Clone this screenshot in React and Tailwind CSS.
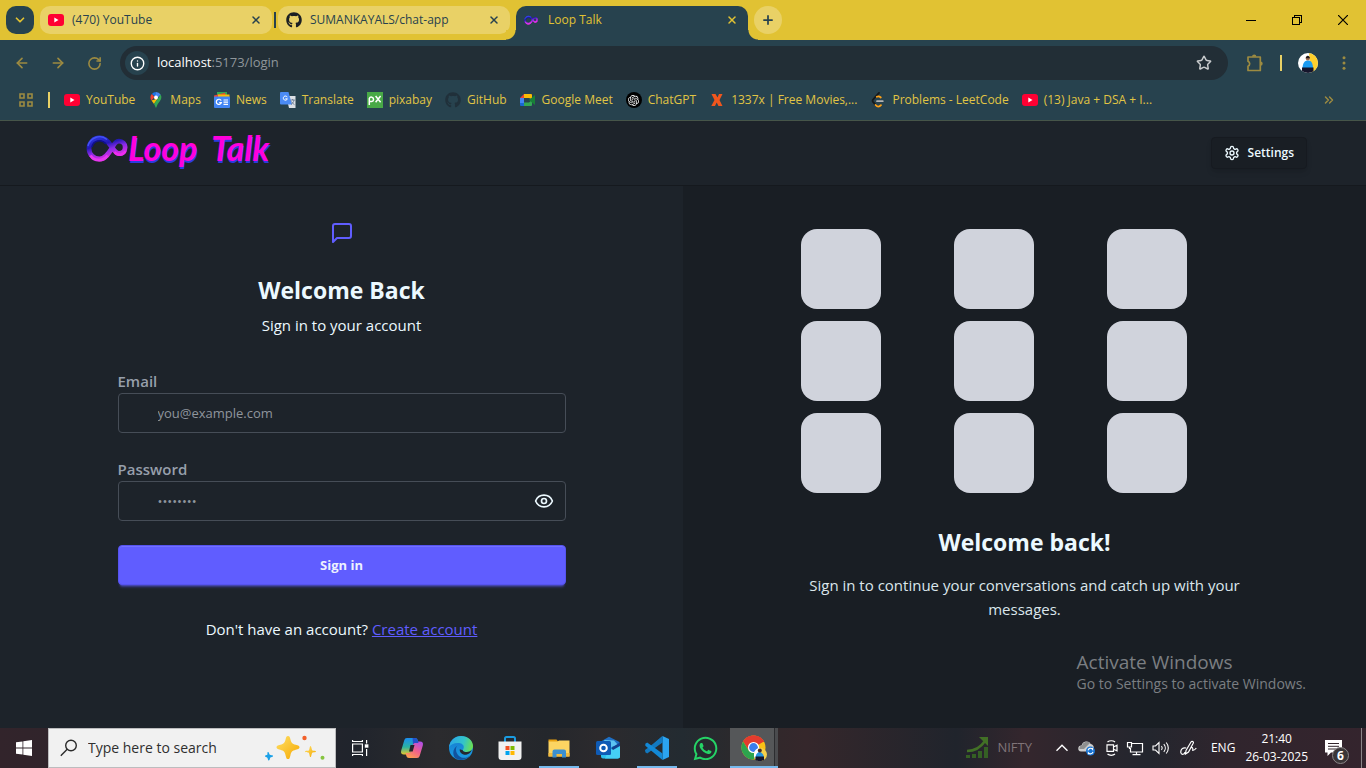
import { useState } from "react";
import { ArrowLeft, ArrowRight, ChevronDown, ChevronsRight, Eye, Info, Plus, RotateCw, Star, X } from "lucide-react";
import { FaGithub, FaWhatsapp } from "react-icons/fa";
import { SiOpenai } from "react-icons/si";

/* ---------- Site and app icons ---------- */

const YouTubeIcon = () => (
  <svg viewBox="0 0 16 16" className="size-4 shrink-0" aria-hidden="true">
    <rect x="0" y="2" width="16" height="12" rx="3" fill="#ff0033" />
    <path d="M6.3 5.6v4.8L10.5 8z" fill="#fff" />
  </svg>
);

const InfinityMark = ({ className, id }) => (
  <svg viewBox="0 0 42 28" className={className} aria-hidden="true">
    <defs>
      <linearGradient id={id} x1="0.1" y1="0" x2="0.6" y2="1">
        <stop offset="0" stopColor="#2b35e0" />
        <stop offset="0.35" stopColor="#2218b4" />
        <stop offset="0.6" stopColor="#8a2be8" />
        <stop offset="1" stopColor="#f22fe0" />
      </linearGradient>
    </defs>
    <path d="M25 12C22 7 18 4 13.500 4a10.500 10.500 0 1 0 0 21C19.500 25 23 19 26 14c2-4 4-6.800 7-6.800a6.100 6.100 0 1 1 0 12.300C29.500 19.500 28 16 25 12z" fill="none" stroke={`url(#${id})`} strokeWidth="4.800" />
    <path d="M2 12C4 4 14-.5 21 5.500" fill="none" stroke="#4653f5" strokeWidth="1.400" />
    <path d="M6 13c1-6 9-9 14-3" fill="none" stroke="#10108c" strokeWidth="1.600" />
    <path d="M4.500 21.500c4 6.500 13 6 17 0" fill="none" stroke="#e838f0" strokeWidth="2.800" />
    <path d="M28.500 18c3 4.500 9.500 3 11-1" fill="none" stroke="#f02cf0" strokeWidth="2.400" />
  </svg>
);

const MapsIcon = () => (
  <svg viewBox="0 0 16 16" className="size-4 shrink-0" aria-hidden="true">
    <path d="M8 0a5.500 5.500 0 0 0-4.200 2l3 2.600z" fill="#1a73e8" />
    <path d="M3.800 2A5.500 5.500 0 0 0 3.500 8.600L6.500 5z" fill="#ea4335" />
    <path d="M8 0a5.500 5.500 0 0 1 4.600 2.600L9.500 6 6.600 4.400z" fill="#4285f4" />
    <path d="M3.500 8.600 9.600 6.500 6 12z" fill="#fbbc04" />
    <path d="M12.600 2.600C14 5 13.500 7.500 11.600 9.600 9.500 12 9 14 8 16c-.8-1.500-1-2.700-2-4z" fill="#34a853" />
    <circle cx="8" cy="5.500" r="2" fill="#fff" />
  </svg>
);

const NewsIcon = () => (
  <svg viewBox="0 0 16 16" className="size-4 shrink-0" aria-hidden="true">
    <path d="M3 0h10v6H3z" fill="#34a853" />
    <path d="M0 3.500 11 .8l1 5H0z" fill="#ea4335" />
    <path d="M4 2.500h11.500V6H4z" fill="#fbbc04" />
    <rect y="4.500" width="16" height="11.500" rx="1" fill="#4285f4" />
    <path d="M7.200 8.600a2.600 2.600 0 1 0 .2 2H5.200M9.500 8h4.500M9.500 10.200h4.500M9.500 12.400h4.500" fill="none" stroke="#fff" strokeWidth="1.200" />
  </svg>
);

const TranslateIcon = () => (
  <svg viewBox="0 0 16 16" className="size-4 shrink-0" aria-hidden="true">
    <path d="M6 4h9.500v12H9z" fill="#dce0e6" />
    <path d="M1 0h7.500l3.500 12.500H1a1 1 0 0 1-1-1V1a1 1 0 0 1 1-1z" fill="#4b8bf5" />
    <path d="M7.300 5.200A2.100 2.100 0 1 0 7.400 6.800H5.400" fill="none" stroke="#fff" strokeWidth="1" />
    <path d="M10.500 8h4.300M12.600 7v1M14 8c-.3 2-1.500 3.500-3 4.500M11.500 9.500c.7 1.500 1.600 2.300 3 3.200" fill="none" stroke="#5d6f86" strokeWidth=".8" />
  </svg>
);

const PixabayIcon = () => (
  <svg viewBox="0 0 16 16" className="size-4 shrink-0" aria-hidden="true">
    <rect width="16" height="16" fill="#48a947" />
    <path d="M2.300 13V6.500a2.200 2.200 0 1 1 2.300 3H2.500M8.600 4l5 6.300M13.600 4l-5 6.300" fill="none" stroke="#fff" strokeWidth="1.500" />
  </svg>
);

const MeetIcon = () => (
  <svg viewBox="0 0 16 16" className="size-4 shrink-0" aria-hidden="true">
    <path d="M0 6l4-4v4z" fill="#ea4335" />
    <path d="M4 2h7a1 1 0 0 1 1 1v4L9 6H4z" fill="#fbbc04" />
    <path d="M0 6h4v5H0z" fill="#4285f4" />
    <path d="M0 11h4v3H1a1 1 0 0 1-1-1z" fill="#1967d2" />
    <path d="M4 10.500h5L12 8v5a1 1 0 0 1-1 1H4z" fill="#34a853" />
    <path d="M9 8l6-5v10z" fill="#188038" />
  </svg>
);

const ChatGptIcon = () => (
  <span className="flex size-4 shrink-0 items-center justify-center rounded-full bg-black text-white">
    <SiOpenai size={11} />
  </span>
);

const XIcon = () => (
  <svg viewBox="0 0 16 16" className="size-4 shrink-0" aria-hidden="true">
    <path d="M2.500 2h4L8.500 5.600 10 2h3.500l-3 6 3 6h-4L7.700 10.400 6 14H2.300l3.200-6z" fill="#f0561d" />
  </svg>
);

const LeetCodeIcon = () => (
  <svg viewBox="0 0 16 16" className="size-4 shrink-0" aria-hidden="true">
    <path d="M9 .9 3.200 7.300a2 2 0 0 0 0 2.900l2.200 2.400" fill="none" stroke="#15191c" strokeWidth="1.800" strokeLinecap="round" />
    <path d="M6.800 4.800c1.500-.9 2.600-.6 4 .7M5.600 13c1.800 2.200 3.700 2.200 5.400.2" fill="none" stroke="#ffa116" strokeWidth="1.800" strokeLinecap="round" />
    <path d="M7 9.200h5.800" stroke="#b3b3b3" strokeWidth="1.700" strokeLinecap="round" />
  </svg>
);

const PuzzleIcon = () => (
  <svg viewBox="0 0 18 18" className="size-[18px]" fill="none" stroke="currentColor" strokeWidth="1.700" strokeLinejoin="round" aria-hidden="true">
    <path d="M2 3h12.300v13.500H2v-4.200a2.700 2.700 0 0 0 0-5z" />
    <path d="M6 2.800a2.200 2.200 0 0 1 4.400 0zM14.500 7.400a2.200 2.200 0 0 1 0 4.400z" fill="currentColor" stroke="none" />
  </svg>
);

const Portrait = ({ className }) => (
  <svg viewBox="0 0 20 20" className={className} aria-hidden="true">
    <clipPath id="face"><circle cx="10" cy="10" r="10" /></clipPath>
    <g clipPath="url(#face)">
      <rect width="20" height="20" fill="#fff" />
      <path d="M11 0h9v20h-7z" fill="#ffd02c" />
      <path d="M4.500 15c.3-5 2-7.500 5.500-7.500s4.700 2.500 5 7.500z" fill="#1d9bf0" />
      <path d="M4 14.500h11.500V20H4z" fill="#15152b" />
      <circle cx="9.800" cy="5.600" r="2" fill="#9b6b50" />
      <path d="M7.700 5.200c0-3.400 4.200-3.400 4.200 0z" fill="#231a1a" />
    </g>
  </svg>
);

const GearIcon = () => (
  <svg viewBox="0 0 24 24" className="size-4" fill="none" stroke="currentColor" strokeWidth="2" strokeLinecap="round" strokeLinejoin="round" aria-hidden="true">
    <path d="M12.22 2h-.44a2 2 0 0 0-2 2v.18a2 2 0 0 1-1 1.730l-.43.25a2 2 0 0 1-2 0l-.15-.08a2 2 0 0 0-2.730.73l-.22.38a2 2 0 0 0 .73 2.730l.15.1a2 2 0 0 1 1 1.720v.51a2 2 0 0 1-1 1.740l-.15.09a2 2 0 0 0-.73 2.730l.22.38a2 2 0 0 0 2.730.73l.15-.08a2 2 0 0 1 2 0l.43.25a2 2 0 0 1 1 1.730V20a2 2 0 0 0 2 2h.44a2 2 0 0 0 2-2v-.18a2 2 0 0 1 1-1.730l.43-.25a2 2 0 0 1 2 0l.15.08a2 2 0 0 0 2.730-.73l.22-.39a2 2 0 0 0-.73-2.730l-.15-.08a2 2 0 0 1-1-1.740v-.5a2 2 0 0 1 1-1.740l.15-.09a2 2 0 0 0 .73-2.730l-.22-.38a2 2 0 0 0-2.730-.73l-.15.08a2 2 0 0 1-2 0l-.43-.25a2 2 0 0 1-1-1.730V4a2 2 0 0 0-2-2z" />
    <circle cx="12" cy="12" r="3" />
  </svg>
);

const BubbleIcon = () => (
  <svg viewBox="0 0 24 24" className="size-6 text-[#605dff]" fill="none" stroke="currentColor" strokeWidth="2" strokeLinecap="round" strokeLinejoin="round" aria-hidden="true">
    <path d="M21 15a2 2 0 0 1-2 2H7l-4 4V5a2 2 0 0 1 2-2h14a2 2 0 0 1 2 2z" />
  </svg>
);

/* ---------- Taskbar icons ---------- */

const CopilotIcon = () => (
  <svg viewBox="0 0 24 24" className="size-6" aria-hidden="true">
    <defs>
      <linearGradient id="cpA" x1="0" y1="0" x2="0" y2="1"><stop offset="0" stopColor="#1b8df0" /><stop offset="0.55" stopColor="#2bb3a0" /><stop offset="1" stopColor="#e8c92c" /></linearGradient>
      <linearGradient id="cpB" x1="0.8" y1="0" x2="0.2" y2="1"><stop offset="0" stopColor="#b04fe8" /><stop offset="0.5" stopColor="#f0608c" /><stop offset="1" stopColor="#ffa24c" /></linearGradient>
    </defs>
    <path d="M7 2h8c1.500 0 2.200.8 2.700 2.200L18.500 7h-3c-1.500 0-2.300.8-2.700 2.200L10.500 17c-.4 1-1 1.500-2 1.500H4C1.500 18.500.5 17 1.200 14.500l3-10C4.700 2.800 5.500 2 7 2z" fill="url(#cpA)" />
    <path d="M17 22H9c-1.500 0-2.200-.8-2.700-2.200L5.500 17h3c1.500 0 2.300-.8 2.700-2.200L13.500 7c.4-1 1-1.500 2-1.500H20c2.500 0 3.500 1.500 2.800 4l-3 10c-.5 1.700-1.300 2.500-2.800 2.500z" fill="url(#cpB)" />
    <path d="M12.600 2h2.400c1.500 0 2.200.8 2.700 2.200L18.500 7h-3c-1.200 0-2 .5-2.500 1.500z" fill="#2450c8" />
    <path d="M10.500 9h4l-1.800 6.500H9z" fill="#22252c" />
  </svg>
);

const EdgeIcon = () => (
  <svg viewBox="0 0 24 24" className="size-6" aria-hidden="true">
    <defs>
      <linearGradient id="edA" x1="0" y1="0.3" x2="1" y2="0.5"><stop offset="0" stopColor="#2aa5e8" /><stop offset="0.6" stopColor="#33c4c9" /><stop offset="1" stopColor="#6adf52" /></linearGradient>
      <linearGradient id="edB" x1="0" y1="0" x2="0" y2="1"><stop offset="0" stopColor="#1578cf" /><stop offset="1" stopColor="#1b9de2" /></linearGradient>
    </defs>
    <circle cx="12" cy="12" r="12" fill="url(#edB)" />
    <path d="M0 11C1 4.500 6 0 12 0c7 0 12 4.800 12 10 0 3.800-3 6-6.200 6-2.500 0-4-.8-4-1.800 0-.8 1-1.300 1-3.200C14.800 8.500 12 7 9 7c-4.500 0-7.500 1.800-9 4z" fill="url(#edA)" />
    <path d="M8.500 9.500C6 12 6.500 17 10 20c3.500 2.800 8.500 2.500 12-1.500-4 5.500-11 7-16 3.500C3 18 4 12 8.500 9.500z" fill="#11539f" />
    <path d="M13.800 14.200c0 1 1.500 1.800 4 1.800 2 0 3.700-.8 4.900-2.200-.7 2.700-2.500 4.500-5.500 4.900-4 .4-7-2.500-6.400-5.500z" fill="#25282d" />
  </svg>
);

const StoreIcon = () => (
  <svg viewBox="0 0 24 24" className="size-6" aria-hidden="true">
    <path d="M7 7V2.500A1.500 1.500 0 0 1 8.500 1h7A1.500 1.500 0 0 1 17 2.500V7" fill="none" stroke="#1a9be0" strokeWidth="2" />
    <path d="M.5 5.500h23V21a3 3 0 0 1-3 3h-17a3 3 0 0 1-3-3z" fill="#f1f1f1" />
    <path d="M7.500 10H11.500v4H7.500z" fill="#f25022" /><path d="M12.500 10h4v4h-4z" fill="#7fba00" />
    <path d="M7.500 15H11.500v4H7.500z" fill="#00a4ef" /><path d="M12.500 15h4v4h-4z" fill="#ffb900" />
  </svg>
);

const FolderIcon = () => (
  <svg viewBox="0 0 24 24" className="size-6" aria-hidden="true">
    <path d="M1.500 3.500h8l2 2.500h-10z" fill="#e8a010" />
    <path d="M1.500 5.500h9l1.500-1h10.500v16h-21z" fill="#fcd462" />
    <path d="M1.500 17h21v3.500h-21z" fill="#f2b93c" />
    <path d="M5.500 21.500v-6a2 2 0 0 1 2-2h9.500a2 2 0 0 1 2 2v6h-4V18h-5.500v3.500z" fill="#3b8fd0" />
  </svg>
);

const OutlookIcon = () => (
  <svg viewBox="0 0 24 24" className="size-6" aria-hidden="true">
    <path d="M4 6 13 .7 23.500 6v6H4z" fill="#1e6fc4" />
    <path d="M8 4 18 4.500 22 9 12 12z" fill="#5cc3f2" />
    <path d="M5 11h19v9a2.500 2.500 0 0 1-2.500 2.500H7A2 2 0 0 1 5 20.500z" fill="#2cc0ee" />
    <path d="M12 15.500 24 9v11a2.500 2.500 0 0 1-2.500 2.500H9z" fill="#45d0f5" />
    <path d="M15 12 24 6.500v3.500L17 14z" fill="#12408f" />
    <rect y="5" width="15" height="14" rx="1.500" fill="#0f5bb5" />
    <circle cx="7.500" cy="12" r="3.300" fill="none" stroke="#fff" strokeWidth="2" />
  </svg>
);

const VsCodeIcon = () => (
  <svg viewBox="0 0 24 24" className="size-6" aria-hidden="true">
    <path d="M17.500 0 24 3v18l-6.500 3z" fill="#2ba4f0" />
    <path d="M17.500 0 2 14 .3 15.500 0 14.500l1-1.500L17.800 6.500z" fill="#1279c0" />
    <path d="M17.500 0v6.500L2.200 17.500.3 16.200v-2z" fill="#1279c0" />
    <path d="M17.500 24v-6.500L2.200 6.500.3 7.800v2z" fill="#1389d6" />
  </svg>
);

const ChromeIcon = () => (
  <svg viewBox="0 0 26 26" className="size-[26px]" aria-hidden="true">
    <circle cx="12.500" cy="12.500" r="12" fill="#fbc116" />
    <path d="M12.500 12.500 2.100 6.500A12 12 0 0 1 22.900 6.500z" fill="#e33b2e" />
    <path d="M12.500 7h10.700A12 12 0 0 0 2.100 6.500l5.600 9z" fill="#e33b2e" />
    <path d="M2.100 6.500A12 12 0 0 0 12.500 24.500l5-9H7.700z" fill="#2da44e" />
    <circle cx="12.500" cy="12.500" r="5.600" fill="#fff" />
    <circle cx="12.500" cy="12.500" r="4.400" fill="#3b7ded" />
    <circle cx="19.500" cy="19.500" r="6.500" fill="#f6d04a" />
    <path d="M19 13a6.500 6.500 0 0 0-2 12.500z" fill="#fff" />
    <path d="M14.500 24c0-5 2-7 4-7s4.500 2 4.500 7z" fill="#2493e0" />
    <path d="M14.500 21.500h8.500V25c-2.500 1.500-6 1.500-8.500 0z" fill="#17172c" />
    <circle cx="18.800" cy="15.500" r="2" fill="#4a2c26" />
  </svg>
);

const SparkleArt = () => (
  <svg viewBox="0 0 62 28" className="h-7 w-[62px]" aria-hidden="true">
    <defs><linearGradient id="sp" x1="0" y1="0" x2="1" y2="1"><stop offset="0" stopColor="#ffe066" /><stop offset="1" stopColor="#f5a800" /></linearGradient></defs>
    <path d="M24 2c1.500 0 1.800.8 2.400 3.200.9 3.600 1.700 4.600 5.300 5.600 2.800.8 3.800 1.200 3.800 2.500s-1 1.700-3.800 2.500c-3.600 1-4.400 2-5.300 5.600-.6 2.400-.9 3.600-2.400 3.600s-1.800-1.200-2.400-3.600c-.9-3.600-1.700-4.600-5.300-5.600-2.800-.8-3.800-1.200-3.800-2.500s1-1.700 3.800-2.500c3.600-1 4.400-2 5.300-5.600C22.200 2.800 22.500 2 24 2z" fill="url(#sp)" />
    <path d="M46.500 12c1 0 1 4 2 4.500s3.500 0 3.500 1-3 .6-3.700 1.200-.8 4.300-1.800 4.300-1-3.700-1.800-4.300-3.700-.2-3.700-1.200 2.700-.5 3.700-1 .8-4.500 1.800-4.500z" fill="url(#sp)" />
    <path d="M4 18c1.200 0 1 2.200 1.800 2.800s3.200 0 3.200 1.200-2 .9-2.600 1.500S6 26.500 4.800 26.500 4 24.300 3.300 23.700 1 23.300 1 22.100s1.800-.7 2.300-1.300S2.900 18 4 18z" fill="#1ba1e8" />
    <circle cx="40.500" cy="4" r="2.200" fill="#f2602a" />
    <circle cx="58.500" cy="23.700" r="2" fill="#86c440" />
  </svg>
);

const lineIcon = { fill: "none", stroke: "currentColor", "aria-hidden": true };

/* ---------- Browser chrome ---------- */

function Tab({ icon, title }) {
  return (
    <div className="flex h-7 w-[232px] items-center rounded-[10px] bg-[#e9d166] pl-2 pr-2.5 text-[#28424e]">
      {icon}
      <span className="ml-2 flex-1 truncate text-xs">{title}</span>
      <button aria-label={`Close ${title}`}><X size={12} strokeWidth={3} /></button>
    </div>
  );
}

function TabStrip() {
  return (
    <div className="flex h-10 items-start bg-[#e1c233] pl-1.5 pt-1.5">
      <button aria-label="Search tabs" className="mr-1.5 flex size-7 items-center justify-center rounded-[10px] bg-[#27424e] text-[#e1c233]">
        <ChevronDown size={14} strokeWidth={3} />
      </button>
      <Tab icon={<YouTubeIcon />} title="(470) YouTube" />
      <span className="mx-0.5 mt-1.5 h-4 w-0.5 bg-[#27424e]" />
      <Tab icon={<FaGithub size={16} className="shrink-0 text-[#1b1f23]" />} title="SUMANKAYALS/chat-app" />
      <div className="relative ml-1.5 flex h-[34px] w-[232px] rounded-t-[10px] bg-[#27424e] pb-1.5 pl-2 pr-2.5 text-[#e1c233]">
        <span className="absolute -left-2.5 bottom-0 size-2.5 bg-[radial-gradient(circle_at_0_0,#e1c233_9px,#27424e_10px)]" />
        <span className="absolute -right-2.5 bottom-0 size-2.5 bg-[radial-gradient(circle_at_100%_0,#e1c233_9px,#27424e_10px)]" />
        <div className="flex flex-1 items-center">
          <InfinityMark className="h-4 w-3.5" id="tabmark" />
          <span className="ml-2.5 flex-1 text-xs">Loop Talk</span>
          <button aria-label="Close Loop Talk"><X size={12} strokeWidth={3} /></button>
        </div>
      </div>
      <button aria-label="New tab" className="ml-1.5 flex size-7 items-center justify-center rounded-full bg-[#e9d166] text-[#27424e]">
        <Plus size={14} strokeWidth={3} />
      </button>
      <div className="ml-auto flex h-7 text-black">
        <button aria-label="Minimize" className="flex w-[46px] items-center justify-center">
          <svg {...lineIcon} viewBox="0 0 10 10" className="size-2.5" shapeRendering="crispEdges"><path d="M0 5.500h10" /></svg>
        </button>
        <button aria-label="Restore" className="flex w-[46px] items-center justify-center">
          <svg {...lineIcon} viewBox="0 0 10 10" className="size-2.5" shapeRendering="crispEdges"><path d="M.5 2.500h7v7h-7zM2.500 2V.5h7v7H8" /></svg>
        </button>
        <button aria-label="Close window" className="flex w-[46px] items-center justify-center">
          <svg {...lineIcon} viewBox="0 0 10 10" className="size-2.5"><path d="M0 0l10 10M10 0L0 10" strokeWidth="1.200" /></svg>
        </button>
      </div>
    </div>
  );
}

function Toolbar() {
  return (
    <div className="flex h-[46px] items-center px-3 text-[#9d8b41]">
      <button aria-label="Back" className="flex w-5 justify-center"><ArrowLeft size={16} strokeWidth={2.5} /></button>
      <button aria-label="Forward" className="ml-4 flex w-5 justify-center"><ArrowRight size={16} strokeWidth={2.5} /></button>
      <button aria-label="Reload" className="ml-4 flex w-5 justify-center"><RotateCw size={15} strokeWidth={2.5} /></button>
      <div className="ml-4 flex h-[34px] flex-1 items-center rounded-full bg-[#222e36] pl-[5px] pr-4">
        <span className="flex size-6 items-center justify-center rounded-full bg-[#27424e] text-white"><Info size={15} strokeWidth={2.2} /></span>
        <div className="ml-2 flex-1 text-[13px] text-[#8f969b]"><span className="text-white">localhost</span>:5173/login</div>
        <button aria-label="Bookmark this page" className="text-[#c8cbcd]"><Star size={16} strokeWidth={2.2} /></button>
      </div>
      <button aria-label="Extensions" className="ml-[18px]"><PuzzleIcon /></button>
      <span className="ml-4 h-4 w-0.5 bg-[#e9d166]" />
      <button aria-label="Profile" className="ml-4"><Portrait className="size-5" /></button>
      <button aria-label="Menu" className="ml-4 flex w-5 justify-center">
        <svg viewBox="0 0 4 14" className="h-3.5 w-1" fill="currentColor" aria-hidden="true"><circle cx="2" cy="1.700" r="1.500" /><circle cx="2" cy="7" r="1.500" /><circle cx="2" cy="12.300" r="1.500" /></svg>
      </button>
    </div>
  );
}

const bookmarks = [
  ["YouTube", <YouTubeIcon />],
  ["Maps", <MapsIcon />],
  ["News", <NewsIcon />],
  ["Translate", <TranslateIcon />],
  ["pixabay", <PixabayIcon />],
  ["GitHub", <FaGithub size={16} className="shrink-0 text-[#20303a]" />],
  ["Google Meet", <MeetIcon />],
  ["ChatGPT", <ChatGptIcon />],
  ["1337x | Free Movies,...", <XIcon />],
  ["Problems - LeetCode", <LeetCodeIcon />],
  ["(13) Java + DSA + I...", <YouTubeIcon />],
];

function BookmarksBar() {
  return (
    <nav aria-label="Bookmarks" className="flex h-7 items-center pl-[19px] pr-[30px] text-xs text-[#e1c544]">
      <svg {...lineIcon} viewBox="0 0 14 14" className="size-3.5 text-[#9d8b41]" strokeWidth="1.600"><path d="M1 1h4v4H1zM9 1h4v4H9zM1 9h4v4H1zM9 9h4v4H9z" /></svg>
      <span className="ml-[15px] mr-3.5 h-4 w-0.5 bg-[#e9d166]" />
      <div className="flex flex-1 gap-[13px]">
        {bookmarks.map(([label, icon]) => (
          <a key={label} href="#" className="flex items-center gap-1.5 whitespace-nowrap">{icon}{label}</a>
        ))}
      </div>
      <button aria-label="More bookmarks" className="text-[#9d8b41]"><ChevronsRight size={14} strokeWidth={2.5} /></button>
    </nav>
  );
}

/* ---------- Login page ---------- */

function Login() {
  const [visible, setVisible] = useState(false);
  const field = "h-10 w-full rounded-sm border border-[#464d57] bg-transparent pl-[39px] text-[13px] text-[#ecf9ff] outline-none placeholder:text-[#8f959d]";
  return (
    <main className="grid flex-1 grid-cols-2 text-[15px] leading-6 text-[#ecf9ff]">
      <section className="flex justify-center bg-[#1d232a] px-4 pt-[35px]">
        <div className="w-full max-w-md">
          <div className="flex justify-center"><BubbleIcon /></div>
          <h1 className="mt-[29px] text-center text-[23px] font-bold leading-8">Welcome Back</h1>
          <p className="mt-[7px] text-center">Sign in to your account</p>
          <form className="mt-8" onSubmit={(e) => e.preventDefault()}>
            <label htmlFor="email" className="block font-semibold text-[#979fab]">Email</label>
            <input id="email" type="email" placeholder="you@example.com" className={field} />
            <label htmlFor="password" className="mt-6 block font-semibold text-[#979fab]">Password</label>
            <div className="relative">
              <input id="password" type={visible ? "text" : "password"} placeholder="••••••••" className={field} />
              <button type="button" aria-label="Show password" onClick={() => setVisible(!visible)} className="absolute inset-y-0 right-3 flex items-center"><Eye size={20} /></button>
            </div>
            <button type="submit" className="mt-6 h-10 w-full rounded-sm border border-[#5653f0] bg-[#605dff] text-[13px] font-bold text-[#edf1fe] shadow-[inset_0_1px_#7270ff,0_3px_2px_-2px_#605dff90,0_4px_3px_-2px_#605dff60]">Sign in</button>
          </form>
          <p className="mt-8 text-center">Don't have an account? <a href="#" className="text-[#605dff] underline">Create account</a></p>
        </div>
      </section>
      <section className="relative flex justify-center bg-[#191e24] px-4 pt-[43px]">
        <div className="w-full max-w-md">
          <div className="grid grid-cols-3 gap-3">
            {Array.from({ length: 9 }, (_, i) => <div key={i} className="size-20 rounded-2xl bg-[#d0d3dc]" />)}
          </div>
          <h2 className="mt-[33px] text-center text-[23px] font-bold leading-8">Welcome back!</h2>
          <p className="mt-[15px] text-center text-[#dbe6ec]">Sign in to continue your conversations and catch up with your messages.</p>
        </div>
        <div className="absolute bottom-[34px] right-[60px] text-[#7b7e82]">
          <p className="text-[19px] leading-6">Activate Windows</p>
          <p className="text-sm leading-5">Go to Settings to activate Windows.</p>
        </div>
      </section>
    </main>
  );
}

/* ---------- Taskbar ---------- */

const apps = [
  ["Copilot", <CopilotIcon />, false],
  ["Edge", <EdgeIcon />, false],
  ["Store", <StoreIcon />, false],
  ["File Explorer", <FolderIcon />, true],
  ["Outlook", <OutlookIcon />, false],
  ["Visual Studio Code", <VsCodeIcon />, true],
  ["WhatsApp", <FaWhatsapp size={27} className="text-[#25d366]" />, false],
];

function Taskbar() {
  return (
    <footer className="flex h-10 items-center bg-[linear-gradient(90deg,#32242b_0%,#30242b_4%,#20242c_26%,#2b2b2e_32%,#24272c_40%,#2c2a2d_44%,#232b31_50%,#2e292b_55%,#35272b_59%,#20242c_70%,#34262d_75%,#23262e_84%,#30252d_90%,#34242d_100%)] text-white">
      <button aria-label="Start" className="flex h-full w-12 items-center justify-center">
        <svg viewBox="0 0 16 16" className="size-4" fill="#fff" aria-hidden="true"><path d="M0 2.300 6.500 1.400v6.200H0zM7.300 1.300 16 0v7.600H7.300zM0 8.400h6.500v6.200L0 13.700zM7.300 8.400H16V16l-8.700-1.300z" /></svg>
      </button>
      <label className="flex h-full w-72 items-center border border-[#bcbcbe] bg-[#f1f1f1] pl-[11px] pr-[9px] text-[#2a2a2a]">
        <svg {...lineIcon} viewBox="0 0 18 18" className="size-[18px] shrink-0" strokeWidth="1.400"><circle cx="11" cy="6.500" r="5.300" /><path d="M7.200 10.300.8 16.700" /></svg>
        <input type="text" aria-label="Search" placeholder="Type here to search" className="ml-2.5 w-0 flex-1 bg-transparent text-sm outline-none placeholder:text-[#2f2f2f]" />
        <SparkleArt />
      </label>
      <button aria-label="Task view" className="mr-[3px] flex h-full w-12 items-center justify-center">
        <svg {...lineIcon} viewBox="0 0 17 16" className="h-4 w-[17px]" strokeWidth="1.200"><path d="M.6 4h9.800v8H.6zM.6 0v2M10.400 0v2M.6 1.500h9.800M.6 14.500h9.800M.6 14v2M10.400 14v2M14.600 0v3.500M14.600 9v7" /><path d="M12.800 4.300h3.600v3.400h-3.600z" fill="#fff" stroke="none" /></svg>
      </button>
      <div className="flex h-full">
        {apps.map(([label, icon, running]) => (
          <button key={label} aria-label={label} className="flex w-[49px] items-center justify-center px-1">
            <span className={`flex h-full w-10 items-center justify-center border-y-2 border-transparent ${running ? "border-b-[#76b9ed]" : ""}`}>{icon}</span>
          </button>
        ))}
        <button aria-label="Chrome" className="flex border-b-2 border-[#76b9ed]">
          <span className="flex h-full w-11 items-center justify-center bg-[#555759] pl-1 pt-0.5"><ChromeIcon /></span>
          <span className="h-full w-1 border-l border-[#2c2d30] bg-[#4a4b4e]" />
        </button>
      </div>
      <div className="ml-auto flex h-full items-center text-xs">
        <svg viewBox="0 0 23 22" className="h-[22px] w-[23px]" aria-hidden="true">
          <path d="M0 21v-3h4v3zM6 21v-4h4v4zM12 21v-7h4v7zM18 21V10h4v11z" fill="#356024" />
          <path d="M1 14c9 0 14-4 18-10" fill="none" stroke="#427026" strokeWidth="2.500" /><path d="M13 0h9v9z" fill="#427026" />
        </svg>
        <span className="ml-2 text-[13px] text-[#7f7478]">NIFTY</span>
        <button aria-label="Hidden icons" className="ml-6"><svg {...lineIcon} viewBox="0 0 12 8" className="h-2 w-3" strokeWidth="1.400"><path d="M.5 6.800 6 1.300l5.500 5.500" /></svg></button>
        <svg viewBox="0 0 18 16" className="ml-2.5 h-4 w-[18px]" aria-hidden="true">
          <path d="M3 11.500a3 3 0 0 1 .6-6A5 5 0 0 1 12.800 4a4 4 0 0 1 3 4v3.500z" fill="#cfcfcf" /><path d="M4 5.500A5 5 0 0 1 12 3l-6 6H1.500a3 3 0 0 1 2.500-3.500z" fill="#8f8f8f" />
          <circle cx="12.500" cy="11" r="4.500" fill="#1673d3" /><path d="M10 10.300a2.600 2.600 0 0 1 4.600-1V7.800M15 11.800a2.600 2.600 0 0 1-4.600 1V14.200" fill="none" stroke="#fff" strokeWidth="1.100" />
        </svg>
        <svg {...lineIcon} viewBox="0 0 12 16" className="ml-2.5 h-4 w-3" strokeWidth="1.200"><path d="M1 4.800h6.500v6.500H1zM7.500 7 11 5.200v5.600L7.500 9.200M1.500 2C3.500.3 7 .3 9 2M1.500 14c2 1.700 5.500 1.700 7.500 0" /></svg>
        <svg {...lineIcon} viewBox="0 0 18 16" className="ml-2 h-4 w-[18px]" strokeWidth="1.200"><path d="M6 3.500h10.500V12H4.500V8M10.500 12v2.500M6.500 14.600h8M1.500 2.500h4V7h-4zM3.500 7v2" /></svg>
        <svg {...lineIcon} viewBox="0 0 18 16" className="ml-2 h-4 w-[18px]" strokeWidth="1.100"><path d="M1 6h2.500L7 2.500v11L3.500 10H1zM9.500 6c.9 1.200.9 2.800 0 4M11.800 4.200c2 2.200 2 5.400 0 7.600M14.200 2.500c2.800 3.200 2.800 7.800 0 11" /></svg>
        <svg {...lineIcon} viewBox="0 0 17 16" className="ml-2.5 h-4 w-[17px]" strokeWidth="1.200"><path d="M6 10.500 11 2c1-1.500 3-.3 2.200 1.300L8.500 12l-3 2zM6.200 8C2.500 7 .5 10 .8 12.500 1.200 15 4.500 15 5 12M10 9c2.500-3.500 3-.3 2.800 1.500 1 0 2.200-.8 3.500-2.500" /></svg>
        <span className="ml-3.5">ENG</span>
        <div className="ml-2.5 flex flex-col text-center leading-[18px]"><time>21:40</time><time>26-03-2025</time></div>
        <button aria-label="6 notifications" className="relative ml-[17px] mr-3 flex size-6 items-center">
          <svg viewBox="0 0 17 16" className="h-4 w-[17px]" aria-hidden="true"><path d="M0 0h17v12.500H6L2.500 16v-3.500H0z" fill="#fff" /><path d="M3 3.500h11M3 6.300h11M3 9h8" stroke="#33262d" /></svg>
          <span className="absolute -bottom-1 right-0 flex size-[17px] items-center justify-center rounded-full border border-[#8b8688] bg-[#3a3638] text-xs font-bold">6</span>
        </button>
        <span className="mr-1 h-full w-px bg-[#8b8487]" />
      </div>
    </footer>
  );
}

export default function App() {
  return (
    <div className="flex min-h-screen flex-col bg-[#1d232a] font-['Open_Sans','Noto_Sans',sans-serif]">
      <header className="border-b border-[#465549] bg-[#27424e] pb-1.5">
        <TabStrip />
        <Toolbar />
        <BookmarksBar />
      </header>
      <div className="border-b border-[#15191e] bg-[#1d232a]">
        <div className="mx-auto flex h-16 max-w-[1280px] items-center justify-between pl-[43px] pr-4">
          <a href="#" className="flex items-center pb-2.5">
            <InfinityMark className="h-7 w-[42px]" id="logomark" />
            <span className="whitespace-pre font-['Lato',sans-serif] text-[34px] font-bold italic leading-8 text-[#ff00dc] [text-shadow:1px_2px_0_#2b3be0]">Loop  Talk</span>
          </a>
          <button className="flex h-8 items-center gap-2 rounded-sm border border-[#161a20] bg-[#191e24] px-3 text-xs font-semibold text-[#ecf9ff] shadow-md">
            <GearIcon />Settings
          </button>
        </div>
      </div>
      <Login />
      <Taskbar />
    </div>
  );
}
